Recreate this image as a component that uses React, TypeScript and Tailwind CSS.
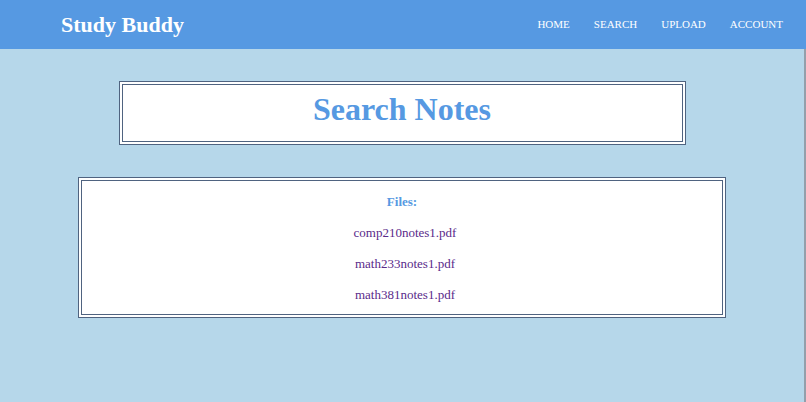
import React from 'react'

const files = ['comp210notes1.pdf', 'math233notes1.pdf', 'math381notes1.pdf']
const links = ['HOME', 'SEARCH', 'UPLOAD', 'ACCOUNT']

export default function App() {
  return (
    <div className="min-h-[402px] bg-[#b6d7ea] font-['Liberation_Serif',serif] flex flex-col">
      {/* Navbar */}
      <nav className="h-[49px] bg-[#5699e2] flex items-center justify-between pl-[61px] pr-[23px]">
        <span className="text-white font-bold text-[22px] leading-none">Study Buddy</span>
        <div className="flex items-center gap-[24px]">
          {links.map(l => (
            <a key={l} href="#" className="text-white text-[11px] leading-none">{l}</a>
          ))}
        </div>
      </nav>

      <main className="flex-1 border-r-2 border-[#939fab] pt-[32px] flex flex-col items-center gap-[32px]">
        {/* Title */}
        <div className="w-[567px] h-[64px] bg-white border-4 border-double border-[#4f6380] pt-[6px]">
          <h1 className="text-center text-[32px] leading-[36px] font-bold text-[#5699e2]">Search Notes</h1>
        </div>

        {/* Files */}
        <div className="w-[648px] bg-white border-4 border-double border-[#4f6380] pt-[5px] pb-[4px] flex flex-col items-center">
          <p className="text-[13px] leading-[31px] font-bold text-[#5699e2]">Files:</p>
          {files.map(f => (
            <a key={f} href="#" className="pl-[6px] text-[13px] leading-[31px] text-[#5a2a8a]">{f}</a>
          ))}
        </div>
      </main>
    </div>
  )
}
